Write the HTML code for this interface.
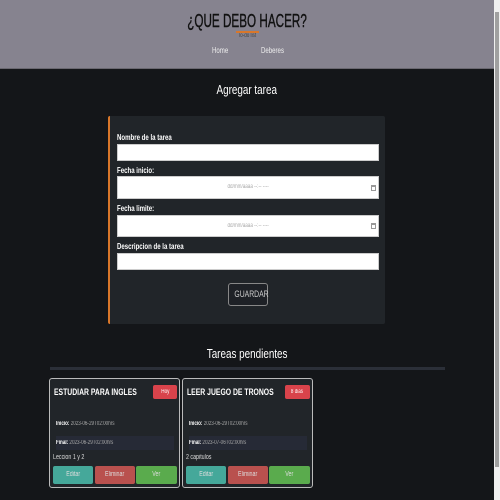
<!DOCTYPE html><html><head><style>
*{box-sizing:border-box;margin:0;padding:0}
body{width:500px;height:500px;overflow:hidden;background:#141619;font-family:"Liberation Sans",sans-serif;position:relative;color:#fff}
.a{position:absolute}
.n{display:inline-block;transform:scaleX(.76);transform-origin:left;white-space:nowrap}
.nc{display:inline-block;transform:scaleX(.76);transform-origin:center;white-space:nowrap}
header{position:absolute;left:0;top:0;width:494px;height:69px;background:#86838f;border-bottom:1px solid #6a6870}
.sb{left:494px;top:0;width:6px;height:500px;background:#f0f0f0}
.th{left:495px;top:12px;width:4px;height:455px;background:#a0a0a0}
.lbl{font-size:8px;font-weight:bold;left:117px}
.inp{left:117px;width:262px;background:#fff;border:1px solid #ccc;color:#aaa;font-size:6px;text-align:center}
.ic{position:absolute;right:2px;top:50%;margin-top:-3px;width:5px;height:6px;border:1px solid #999;border-top-width:2px}
.card{border:1px solid #bbb;border-radius:3px;background:#212529;width:131px;height:110px;top:378px}
.t{font-size:9px;font-weight:bold;top:8px;left:4px}
.bd{background:#d9434b;border-radius:2px;color:#fff;font-size:6px;text-align:center;line-height:14px;top:6px;height:14px}
.s{font-size:6px;color:#aaa;left:6px}.s b{color:#fff}
.btn{top:87px;height:18px;width:40px;border-radius:2px;font-size:7px;text-align:center;line-height:18px;color:#ddd}
</style></head><body>
<header>
<div class="a" style="left:0;width:494px;top:11px;text-align:center;font-size:18px;color:#111;-webkit-text-stroke:0.4px #111"><span class="nc" style="transform:scaleX(.65)">¿QUE DEBO HACER?</span></div>
<div class="a" style="left:236px;top:31px;width:23px;height:2px;background:#d9772a"></div>
<div class="a" style="left:0;width:494px;top:33px;text-align:center;font-size:6px;color:#444"><span class="nc">To-do list</span></div>
<div class="a" style="left:212px;top:46px;font-size:8px;color:#eee"><span class="n">Home</span></div>
<div class="a" style="left:261px;top:46px;font-size:8px;color:#eee"><span class="n">Deberes</span></div>
</header>
<div class="a" style="left:0;width:494px;top:82px;text-align:center;font-size:13px"><span class="nc">Agregar tarea</span></div>
<div class="a" style="left:108px;top:116px;width:277px;height:208px;background:#212529;border-left:2px solid #d9772a;border-radius:2px"></div>
<div class="a lbl" style="top:133px"><span class="n">Nombre de la tarea</span></div>
<div class="a inp" style="top:144px;height:17px"></div>
<div class="a lbl" style="top:166px"><span class="n">Fecha inicio:</span></div>
<div class="a inp" style="top:176px;height:23px;line-height:21px"><span class="nc">dd/mm/aaaa --:-- ----</span><i class="ic"></i></div>
<div class="a lbl" style="top:204px"><span class="n">Fecha limite:</span></div>
<div class="a inp" style="top:215px;height:22px;line-height:20px"><span class="nc">dd/mm/aaaa --:-- ----</span><i class="ic"></i></div>
<div class="a lbl" style="top:242px"><span class="n">Descripcion de la tarea</span></div>
<div class="a inp" style="top:253px;height:17px"></div>
<div class="a" style="left:228px;top:283px;width:40px;height:23px;border:1px solid #888;border-radius:3px;background:#1e2126;font-size:9px;color:#ccc;text-align:center;line-height:21px"><span class="nc">GUARDAR</span></div>
<div class="a" style="left:0;width:494px;top:346px;text-align:center;font-size:13px"><span class="nc">Tareas pendientes</span></div>
<div class="a" style="left:50px;top:367px;width:395px;height:3px;background:#2b2f38"></div>
<div class="a card" style="left:49px">
<div class="a t"><span class="n">ESTUDIAR PARA INGLES</span></div>
<div class="a bd" style="left:103px;width:24px"><span class="nc">Hoy</span></div>
<div class="a s" style="top:42px"><span class="n"><b>Inicio:</b> 2023-06-29T02:00hrs</span></div>
<div class="a" style="left:6px;top:57px;width:118px;height:14px;background:#262a36"></div>
<div class="a s" style="top:61px"><span class="n"><b>Final:</b> 2023-06-29T02:00hrs</span></div>
<div class="a" style="left:3px;top:75px;font-size:7px;color:#ddd"><span class="n">Leccion 1 y 2</span></div>
<div class="a btn" style="left:3px;background:#45a89a"><span class="nc">Editar</span></div>
<div class="a btn" style="left:45px;background:#b9514e"><span class="nc">Eliminar</span></div>
<div class="a btn" style="left:86px;width:41px;background:#5aab4d"><span class="nc">Ver</span></div>
</div>
<div class="a card" style="left:182px">
<div class="a t"><span class="n">LEER JUEGO DE TRONOS</span></div>
<div class="a bd" style="left:102px;width:25px"><span class="nc">8 dias</span></div>
<div class="a s" style="top:42px"><span class="n"><b>Inicio:</b> 2023-06-29T02:00hrs</span></div>
<div class="a" style="left:6px;top:57px;width:118px;height:14px;background:#262a36"></div>
<div class="a s" style="top:61px"><span class="n"><b>Final:</b> 2023-07-06T02:00hrs</span></div>
<div class="a" style="left:3px;top:75px;font-size:7px;color:#ddd"><span class="n">2 capitulos</span></div>
<div class="a btn" style="left:3px;background:#45a89a"><span class="nc">Editar</span></div>
<div class="a btn" style="left:45px;background:#b9514e"><span class="nc">Eliminar</span></div>
<div class="a btn" style="left:86px;width:41px;background:#5aab4d"><span class="nc">Ver</span></div>
</div>
<div class="a sb"></div><div class="a th"></div>
</body></html>
